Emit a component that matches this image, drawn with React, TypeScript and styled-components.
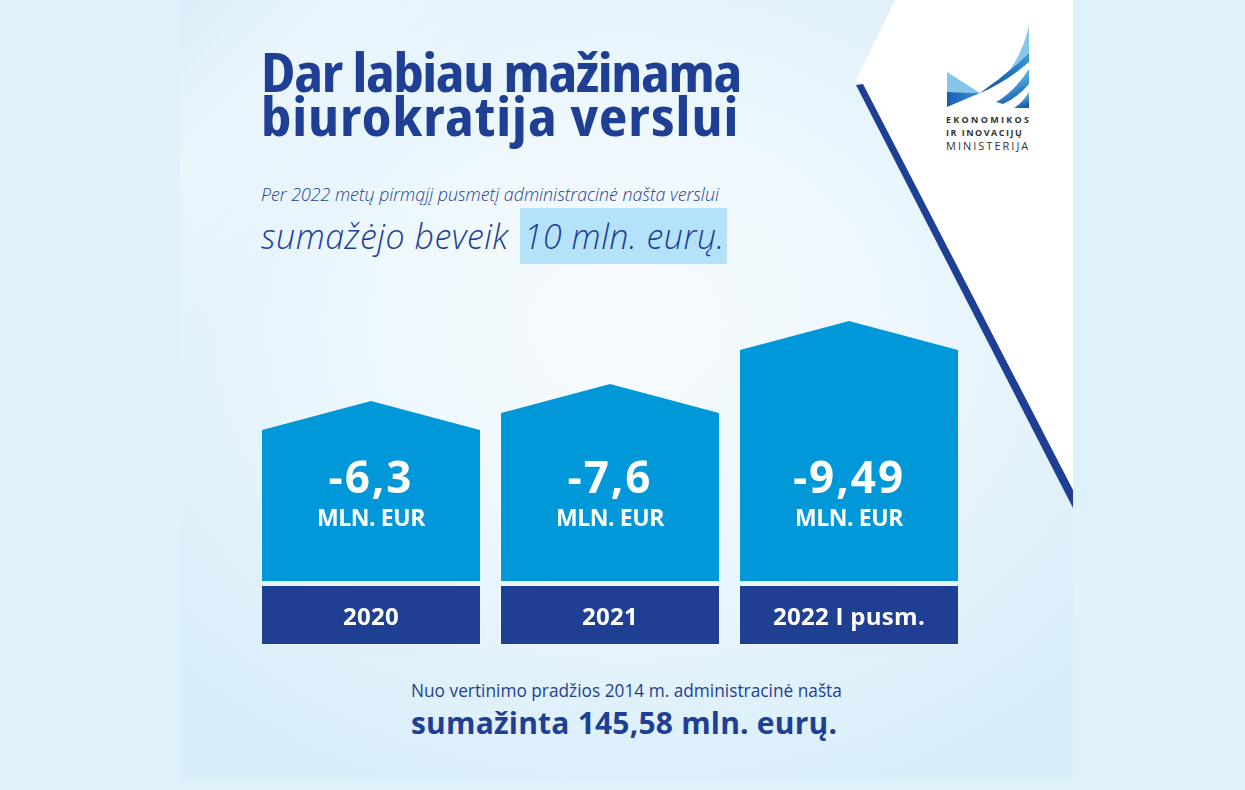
import React from 'react';
import styled, { createGlobalStyle } from 'styled-components';

const GlobalStyle = createGlobalStyle`
  html, body {
    margin: 0;
    padding: 0;
    background: #dff1fb;
  }
  body {
    font-family: "Open Sans", "Noto Sans", sans-serif;
  }
`;

const Page = styled.div`
  width: 1245px;
  height: 790px;
  padding-left: 180px;
  box-sizing: border-box;
`;

const Panel = styled.section`
  position: relative;
  width: 893px;
  height: 779px;
  box-sizing: border-box;
  padding: 24px 43px 0 81px;
  overflow: hidden;
  background:
    linear-gradient(135deg, rgba(255, 255, 255, 0) 0%, rgba(255, 255, 255, 0.35) 10%, rgba(255, 255, 255, 0) 22%),
    radial-gradient(ellipse 70% 65% at 50% 42%, #f7fbfe 0%, #eef8fd 40%, #e0f1fb 75%, #d8edf9 100%);
`;

const CornerDecor = styled.svg`
  position: absolute;
  top: 0;
  right: 0;
  z-index: 0;
`;

const Content = styled.div`
  position: relative;
  z-index: 1;
`;

const Header = styled.header`
  display: flex;
  justify-content: space-between;
  align-items: flex-start;
`;

const TitleBlock = styled.div`
  margin-top: 25px;
`;

const Title = styled.h1`
  margin: 0;
  font-family: "Noto Sans Display", "Open Sans", sans-serif;
  font-stretch: 80%;
  font-size: 54px;
  line-height: 44px;
  font-weight: 700;
  color: #1f3f94;
`;

const TitleLine = styled.span<{ $tracking: number }>`
  display: block;
  letter-spacing: ${({ $tracking }) => $tracking}px;
  white-space: nowrap;
`;

const Lead = styled.p`
  margin: 46px 0 0;
  font-size: 17.8px;
  line-height: 22px;
  font-style: italic;
  font-weight: 300;
  color: #1f3f94;
`;

const Claim = styled.p`
  margin: 3px 0 0;
  font-size: 34px;
  line-height: 56px;
  font-style: italic;
  font-weight: 300;
  letter-spacing: 0.5px;
  color: #1f3f94;
  white-space: nowrap;
`;

const Highlight = styled.span`
  display: inline-block;
  margin-left: 2px;
  padding: 0 2px 0 4px;
  background: #b4e3f9;
`;

const Logo = styled.div`
  display: flex;
  flex-direction: column;
  width: 84px;
  color: #333;
`;

const LogoLine = styled.span<{ $bold?: boolean; $size: number; $spacing: number }>`
  display: block;
  font-size: ${({ $size }) => $size}px;
  line-height: 13px;
  font-weight: ${({ $bold }) => ($bold ? 700 : 400)};
  letter-spacing: ${({ $spacing }) => $spacing}px;
  white-space: nowrap;
`;

const LogoText = styled.div`
  margin-top: 5px;
`;

const Chart = styled.div`
  display: grid;
  grid-template-columns: repeat(3, 218px);
  column-gap: 21px;
  align-items: end;
  margin: 57px 0 0 1px;
`;

const Column = styled.div`
  display: flex;
  flex-direction: column;
  gap: 5px;
  filter: drop-shadow(0 0 0.8px #ffffff);
`;

const BarBody = styled.div<{ $height: number }>`
  height: ${({ $height }) => $height}px;
  box-sizing: border-box;
  padding-bottom: 51px;
  display: flex;
  flex-direction: column;
  align-items: center;
  justify-content: flex-end;
  background: #0098d8;
  color: #fff;
  clip-path: polygon(0 29px, 50% 0, 100% 29px, 100% 100%, 0 100%);
`;

const Value = styled.span`
  font-size: 44px;
  line-height: 44px;
  font-weight: 700;
  letter-spacing: 2px;
`;

const Unit = styled.span`
  margin-top: 6px;
  font-size: 23px;
  line-height: 26px;
  font-weight: 700;
  letter-spacing: -0.4px;
`;

const BarBase = styled.div`
  height: 58px;
  display: flex;
  align-items: center;
  justify-content: center;
  background: #1f3f93;
  color: #fff;
  font-size: 24px;
  font-weight: 700;
  letter-spacing: 0.3px;
`;

const Summary = styled.div`
  margin: 36px 0 0 150px;
  color: #1f3f94;
`;

const SummaryLead = styled.p`
  margin: 0;
  font-size: 17.3px;
  line-height: 22px;
  font-weight: 400;
`;

const SummaryTotal = styled.p`
  margin: 4px 0 0;
  font-size: 30px;
  line-height: 34px;
  font-weight: 700;
  letter-spacing: 0.2px;
`;

const bars = [
  { year: '2020', value: '-6,3', height: 180 },
  { year: '2021', value: '-7,6', height: 197 },
  { year: '2022 I pusm.', value: '-9,49', height: 260 },
];

const MinistryMark = () => (
  <svg width="84" height="84" viewBox="0 0 84 84">
    <defs>
      <linearGradient id="leftDark" x1="0" y1="0" x2="1" y2="0">
        <stop offset="0" stopColor="#1b5cb3" />
        <stop offset="1" stopColor="#3796d6" />
      </linearGradient>
      <linearGradient id="wingBand" x1="0" y1="1" x2="1" y2="0">
        <stop offset="0" stopColor="#1a4fa6" />
        <stop offset="0.6" stopColor="#2178c6" />
        <stop offset="1" stopColor="#3a9ad8" />
      </linearGradient>
      <linearGradient id="stripeFill" x1="0" y1="0" x2="0.4" y2="1">
        <stop offset="0" stopColor="#8ccbea" />
        <stop offset="0.5" stopColor="#52a8dc" />
        <stop offset="1" stopColor="#1d5db2" />
      </linearGradient>
    </defs>
    <polygon points="1,48 34,69 1,68" fill="#86c6e8" />
    <polygon points="1,68 34,69 1,83" fill="url(#leftDark)" />
    <path d="M34,69 Q70,55 83,2 L83,29 Q60,51 34,69 Z" fill="#86c6e8" />
    <path d="M34,69 Q60,51 83,29 L83,38 Q60,58 34,69 Z" fill="url(#wingBand)" />
    <path d="M50,78 Q68,68 83,45 L83,60 Q72,73 57,80 Z" fill="url(#stripeFill)" />
    <path d="M68,84 Q77,78 83,68 L83,84 Z" fill="url(#stripeFill)" />
  </svg>
);

export default function App() {
  return (
    <>
      <GlobalStyle />
      <Page>
        <Panel>
          <CornerDecor width="223" height="512" viewBox="0 0 223 512">
            <polygon points="45,0 223,0 223,492 13,86 6,80" fill="#ffffff" />
            <polygon points="6,85 13,84 223,490 223,508" fill="#1f3f94" />
          </CornerDecor>
          <Content>
            <Header>
              <TitleBlock>
                <Title>
                  <TitleLine $tracking={-1.3}>Dar labiau mažinama</TitleLine>
                  <TitleLine $tracking={1}>biurokratija verslui</TitleLine>
                </Title>
                <Lead>Per 2022 metų pirmąjį pusmetį administracinė našta verslui</Lead>
                <Claim>
                  sumažėjo beveik <Highlight>10 mln. eurų.</Highlight>
                </Claim>
              </TitleBlock>
              <Logo>
                <MinistryMark />
                <LogoText>
                  <LogoLine $bold $size={9} $spacing={2.3}>EKONOMIKOS</LogoLine>
                  <LogoLine $bold $size={9} $spacing={1.5}>IR INOVACIJŲ</LogoLine>
                  <LogoLine $size={11} $spacing={2}>MINISTERIJA</LogoLine>
                </LogoText>
              </Logo>
            </Header>
            <Chart>
              {bars.map((bar) => (
                <Column key={bar.year}>
                  <BarBody $height={bar.height}>
                    <Value>{bar.value}</Value>
                    <Unit>MLN. EUR</Unit>
                  </BarBody>
                  <BarBase>{bar.year}</BarBase>
                </Column>
              ))}
            </Chart>
            <Summary>
              <SummaryLead>Nuo vertinimo pradžios 2014 m. administracinė našta</SummaryLead>
              <SummaryTotal>sumažinta 145,58 mln. eurų.</SummaryTotal>
            </Summary>
          </Content>
        </Panel>
      </Page>
    </>
  );
}
